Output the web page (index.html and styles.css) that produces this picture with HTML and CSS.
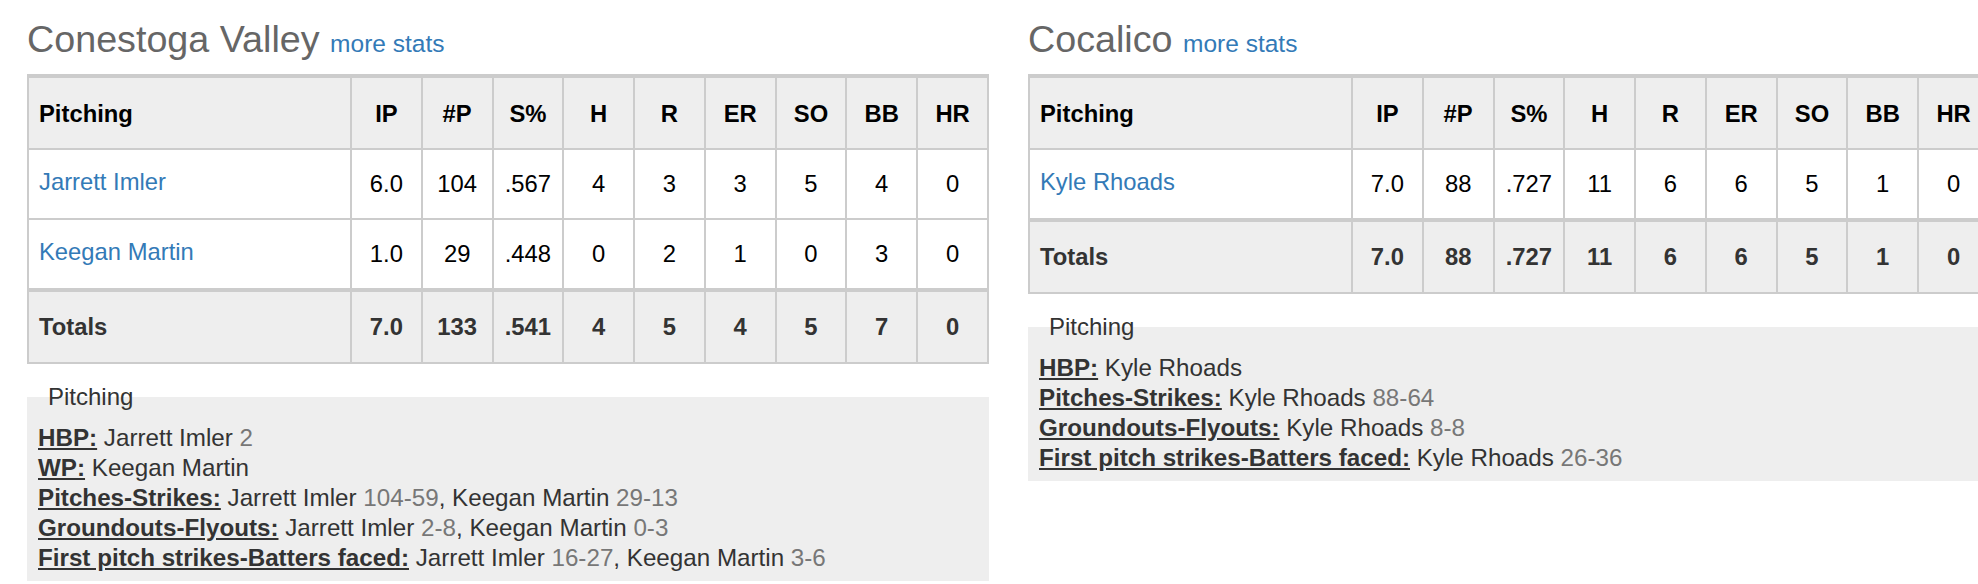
FILE: index.html
```html
<!DOCTYPE html>
<html lang="en">
<head>
<meta charset="utf-8">
<title>Pitching</title>
<link rel="stylesheet" href="styles.css">
</head>
<body>
<div class="teams">
  <section class="team">
    <h2 class="team-title">Conestoga Valley <a class="more" href="#">more stats</a></h2>
    <table class="stats">
      <thead>
        <tr><th class="name">Pitching</th><th>IP</th><th>#P</th><th>S%</th><th>H</th><th>R</th><th>ER</th><th>SO</th><th>BB</th><th>HR</th></tr>
      </thead>
      <tbody>
        <tr><td class="name"><a href="#">Jarrett Imler</a></td><td>6.0</td><td>104</td><td>.567</td><td>4</td><td>3</td><td>3</td><td>5</td><td>4</td><td>0</td></tr>
        <tr><td class="name"><a href="#">Keegan Martin</a></td><td>1.0</td><td>29</td><td>.448</td><td>0</td><td>2</td><td>1</td><td>0</td><td>3</td><td>0</td></tr>
      </tbody>
      <tfoot>
        <tr><td class="name">Totals</td><td>7.0</td><td>133</td><td>.541</td><td>4</td><td>5</td><td>4</td><td>5</td><td>7</td><td>0</td></tr>
      </tfoot>
    </table>
    <fieldset class="notes">
      <legend>Pitching</legend>
      <div class="note"><span class="label">HBP:</span> Jarrett Imler <span class="val">2</span></div>
      <div class="note"><span class="label">WP:</span> Keegan Martin</div>
      <div class="note"><span class="label">Pitches-Strikes:</span> Jarrett Imler <span class="val">104-59</span>, Keegan Martin <span class="val">29-13</span></div>
      <div class="note"><span class="label">Groundouts-Flyouts:</span> Jarrett Imler <span class="val">2-8</span>, Keegan Martin <span class="val">0-3</span></div>
      <div class="note"><span class="label">First pitch strikes-Batters faced:</span> Jarrett Imler <span class="val">16-27</span>, Keegan Martin <span class="val">3-6</span></div>
    </fieldset>
  </section>
  <section class="team">
    <h2 class="team-title">Cocalico <a class="more" href="#">more stats</a></h2>
    <table class="stats">
      <thead>
        <tr><th class="name">Pitching</th><th>IP</th><th>#P</th><th>S%</th><th>H</th><th>R</th><th>ER</th><th>SO</th><th>BB</th><th>HR</th></tr>
      </thead>
      <tbody>
        <tr><td class="name"><a href="#">Kyle Rhoads</a></td><td>7.0</td><td>88</td><td>.727</td><td>11</td><td>6</td><td>6</td><td>5</td><td>1</td><td>0</td></tr>
      </tbody>
      <tfoot>
        <tr><td class="name">Totals</td><td>7.0</td><td>88</td><td>.727</td><td>11</td><td>6</td><td>6</td><td>5</td><td>1</td><td>0</td></tr>
      </tfoot>
    </table>
    <fieldset class="notes">
      <legend>Pitching</legend>
      <div class="note"><span class="label">HBP:</span> Kyle Rhoads</div>
      <div class="note"><span class="label">Pitches-Strikes:</span> Kyle Rhoads <span class="val">88-64</span></div>
      <div class="note"><span class="label">Groundouts-Flyouts:</span> Kyle Rhoads <span class="val">8-8</span></div>
      <div class="note"><span class="label">First pitch strikes-Batters faced:</span> Kyle Rhoads <span class="val">26-36</span></div>
    </fieldset>
  </section>
</div>
</body>
</html>
```
FILE: styles.css
```css
html, body {
  margin: 0;
  padding: 0;
  overflow: hidden;
  background: #fff;
}
body {
  font-family: "Liberation Sans", Arial, Helvetica, sans-serif;
  color: #333;
}
.teams {
  display: flex;
  gap: 39px;
  padding: 17px 0 0 27px;
}
.team {
  flex: 0 0 962px;
  width: 962px;
}
.team-title {
  margin: 0 0 8px;
  font-size: 37.7px;
  font-weight: normal;
  line-height: 44px;
  color: #666;
}
.more {
  font-size: 24.5px;
  color: #337ab7;
  text-decoration: none;
}
.stats {
  width: 962px;
  border-collapse: collapse;
  table-layout: fixed;
  font-size: 23.8px;
  line-height: 26px;
}
.stats th,
.stats td {
  border: 2px solid #ccc;
  text-align: center;
  padding: 21px 2px;
  color: #000;
}
.stats .name {
  width: 309px;
  text-align: left;
  padding-left: 10px;
}
.stats thead th {
  background: #eee;
  font-weight: bold;
  padding-top: 23px;
  padding-bottom: 21px;
  border-top-width: 4px;
}
.stats tbody td.name {
  padding-top: 19px;
  padding-bottom: 23px;
}
.stats tbody a {
  color: #337ab7;
  text-decoration: none;
}
.stats tfoot td {
  background: #eee;
  font-weight: bold;
  color: #333;
  padding-top: 22px;
  padding-bottom: 22px;
  border-top-width: 4px;
}
.notes {
  margin: 18px 0 0;
  padding: 11px 11px 8px;
  border: 0;
  background: #eee;
  min-width: 0;
  font-size: 24.2px;
  line-height: 30px;
  color: #333;
}
.notes legend {
  padding: 0;
  margin-left: 10px;
  font-size: 24px;
  line-height: 30px;
  color: #333;
}
.label {
  font-weight: bold;
  text-decoration: underline;
}
.val {
  color: #777;
}
```
